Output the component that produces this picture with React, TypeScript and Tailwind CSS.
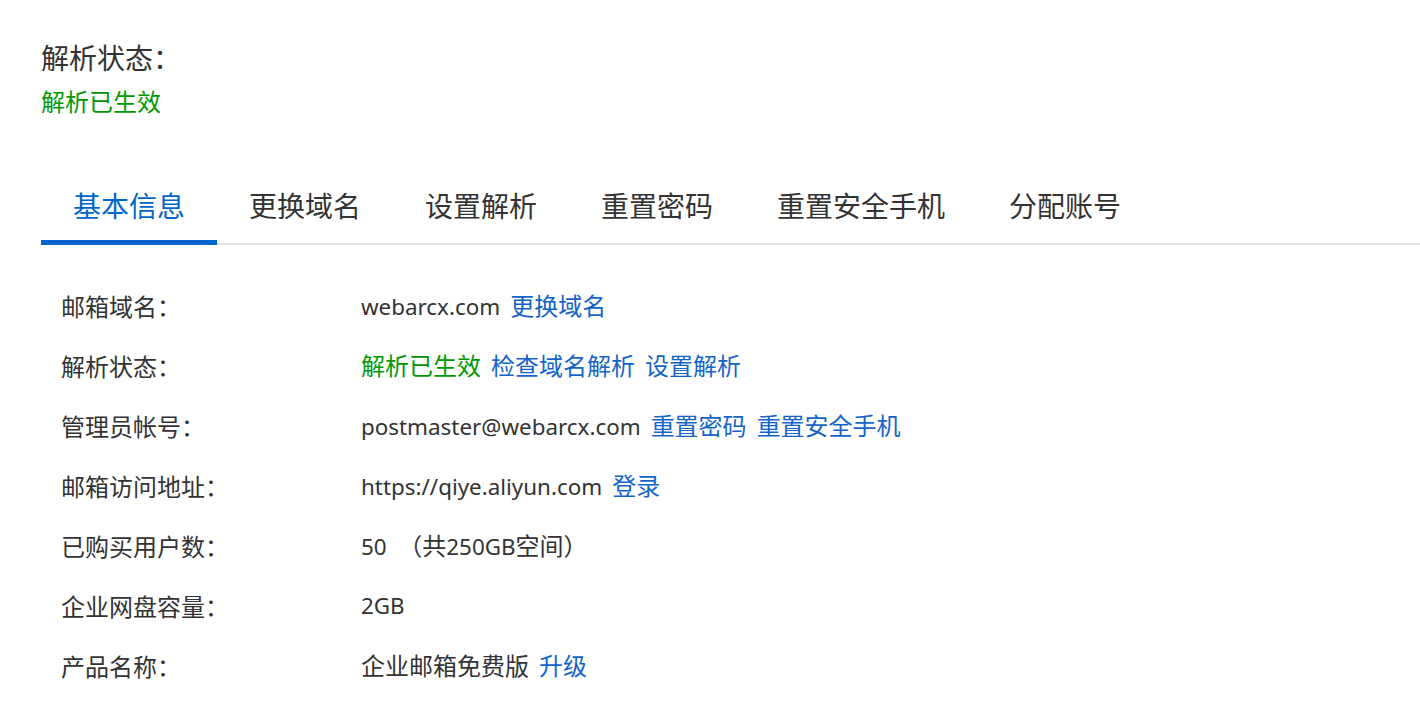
import React from "react";

const font = { fontFamily: '"Noto Sans", "Noto Sans CJK SC", sans-serif' };

type Part = { t: string; c?: "text" | "link" | "green" };

const rows: { label: string; parts: Part[] }[] = [
  { label: "邮箱域名：", parts: [{ t: "webarcx.com" }, { t: "更换域名", c: "link" }] },
  {
    label: "解析状态：",
    parts: [
      { t: "解析已生效", c: "green" },
      { t: "检查域名解析", c: "link" },
      { t: "设置解析", c: "link" },
    ],
  },
  {
    label: "管理员帐号：",
    parts: [
      { t: "postmaster@webarcx.com" },
      { t: "重置密码", c: "link" },
      { t: "重置安全手机", c: "link" },
    ],
  },
  { label: "邮箱访问地址：", parts: [{ t: "https://qiye.aliyun.com" }, { t: "登录", c: "link" }] },
  { label: "已购买用户数：", parts: [{ t: "50  （共250GB空间）" }] },
  { label: "企业网盘容量：", parts: [{ t: "2GB" }] },
  { label: "产品名称：", parts: [{ t: "企业邮箱免费版" }, { t: "升级", c: "link" }] },
];

const tabs = ["基本信息", "更换域名", "设置解析", "重置密码", "重置安全手机", "分配账号"];

function Mixed({ text }: { text: string }) {
  const runs = text.match(/[\u3000-\u9fff\uff00-\uffef]+|[^\u3000-\u9fff\uff00-\uffef]+/g) || [];
  return (
    <>
      {runs.map((r, i) =>
        /[\u3000-\u9fff\uff00-\uffef]/.test(r) ? (
          <span key={i} className="text-[24px]">
            {r}
          </span>
        ) : (
          <span key={i} className="text-[22.4px]">
            {r}
          </span>
        )
      )}
    </>
  );
}

export default function App() {
  return (
    <div className="w-[1420px] h-[723px] bg-white pl-[41px] pt-[40px] text-[#333333] overflow-hidden" style={font}>
      <div className="text-[28px] leading-[36px]">解析状态：</div>
      <div className="mt-[10px] text-[24px] leading-[32px] text-[#009900]">解析已生效</div>
      <div className="mt-[68px] flex border-b-2 border-[#e5e5e5]">
        {tabs.map((t, i) => (
          <div
            key={t}
            className={
              i === 0
                ? "px-8 pb-[14px] text-[28px] leading-[40px] -mb-[2px] border-b-[5px] border-[#0066cc] text-[#0066cc]"
                : "px-8 pb-[14px] text-[28px] leading-[40px] -mb-[2px] border-b-[5px] border-transparent text-[#333333]"
            }
          >
            {t}
          </div>
        ))}
      </div>
      <div className="pt-[32px]">
        {rows.map((r) => (
          <div key={r.label} className="h-[60px] flex items-center leading-[30px]">
            <div className="w-[320px] pl-[20px] text-[24px]">{r.label}</div>
            <div className="flex items-baseline gap-[10px] whitespace-pre">
              {r.parts.map((p, j) => (
                <span
                  key={j}
                  className={
                    p.c === "link" ? "text-[#1464c8]" : p.c === "green" ? "text-[#009900]" : "text-[#333333]"
                  }
                >
                  <Mixed text={p.t} />
                </span>
              ))}
            </div>
          </div>
        ))}
      </div>
    </div>
  );
}
